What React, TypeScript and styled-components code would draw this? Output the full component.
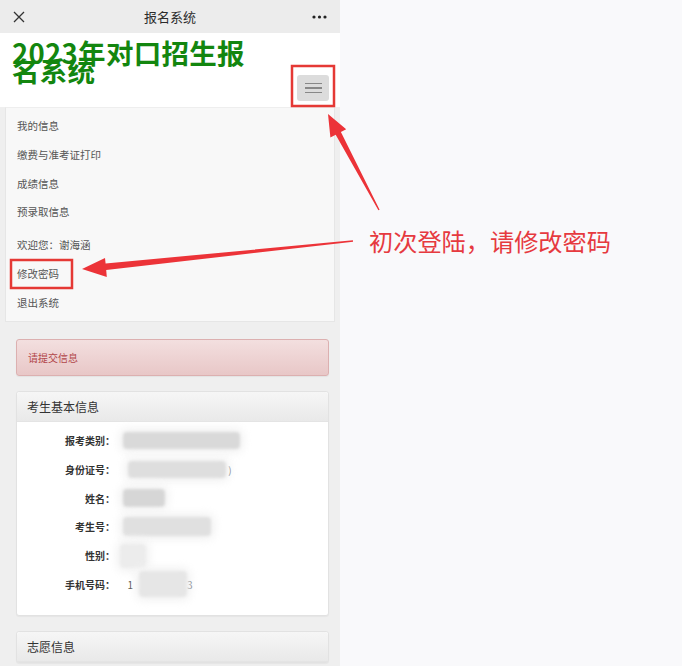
import React from 'react';
import styled, { createGlobalStyle } from 'styled-components';

const GlobalStyle = createGlobalStyle`
  html, body {
    margin: 0;
    padding: 0;
    background: #f9f9fb;
    font-family: "Noto Sans CJK SC", "Noto Sans", sans-serif;
  }
`;

const Page = styled.div`
  position: relative;
  width: 682px;
  height: 666px;
  display: flex;
  overflow: hidden;
  background: #f9f9fb;
`;

const Phone = styled.div`
  width: 340px;
  height: 666px;
  background: #efefef;
  display: flex;
  flex-direction: column;
  overflow: hidden;
`;

const TopBar = styled.div`
  height: 33px;
  flex: none;
  background: #ececec;
  display: grid;
  grid-template-columns: 40px 1fr 40px;
  align-items: center;
  color: #333;
`;

const BarTitle = styled.div`
  text-align: center;
  font-size: 13px;
  color: #2b2b2b;
`;

const BarIcon = styled.div<{ $side: 'left' | 'right' }>`
  display: flex;
  justify-content: ${p => (p.$side === 'left' ? 'flex-start' : 'flex-end')};
  padding: ${p => (p.$side === 'left' ? '0 0 0 13px' : '0 13px 0 0')};
`;

const Header = styled.div`
  height: 74px;
  flex: none;
  background: #fff;
  display: flex;
  justify-content: space-between;
  align-items: flex-end;
  padding: 0 11px 6px 12px;
  box-sizing: border-box;
`;

const Brand = styled.h1`
  align-self: flex-start;
  margin: 10px 0 0;
  width: 256px;
  font-size: 27.5px;
  line-height: 18px;
  font-weight: bold;
  color: #13860f;
  letter-spacing: 0.3px;
`;

const Toggle = styled.button`
  width: 32px;
  height: 26px;
  border: none;
  border-radius: 3px;
  background: #dcdcdc;
  display: flex;
  flex-direction: column;
  align-items: center;
  justify-content: center;
  gap: 3px;
  padding: 0;
`;

const ToggleBar = styled.span`
  display: block;
  width: 17px;
  height: 1.5px;
  background: #888;
`;

const Nav = styled.div`
  flex: none;
  margin: 0 5px;
  background: #f8f8f8;
  border: 1px solid #e6e6e6;
  border-top-color: #eee;
  padding: 4px 0 3px 11px;
  box-sizing: border-box;
`;

const NavGroup = styled.ul<{ $gap?: number }>`
  list-style: none;
  margin: ${p => p.$gap ?? 0}px 0 0;
  padding: 0;
`;

const NavItem = styled.li`
  height: 28.8px;
  line-height: 28.8px;
  font-size: 10.5px;
  color: #555;
`;

const Content = styled.div`
  padding: 17px 11px 0 16px;
  display: flex;
  flex-direction: column;
  gap: 15px;
`;

const Alert = styled.div`
  height: 37px;
  box-sizing: border-box;
  border: 1px solid #dcb0b0;
  border-radius: 3px;
  background: linear-gradient(#f3dfdf, #e8c7c7);
  color: #b2474a;
  font-size: 10px;
  padding-left: 11px;
  display: flex;
  align-items: center;
  box-shadow: 0 1px 1px rgba(0, 0, 0, 0.05);
`;

const Panel = styled.div`
  border: 1px solid #e2e2e2;
  border-radius: 3px;
  background: #fff;
  box-shadow: 0 1px 1px rgba(0, 0, 0, 0.04);
`;

const PanelHeading = styled.div`
  height: 30px;
  box-sizing: border-box;
  padding-left: 10px;
  display: flex;
  align-items: center;
  font-size: 12px;
  color: #333;
  background: linear-gradient(#f6f6f6, #e9e9e9);
  border-bottom: 1px solid #e4e4e4;
  border-radius: 3px 3px 0 0;
`;

const PanelBody = styled.div`
  padding: 5px 0 16px;
  display: grid;
  grid-template-columns: 98px 1fr;
  grid-auto-rows: 28.7px;
  column-gap: 8px;
  align-items: center;
`;

const Label = styled.div`
  text-align: right;
  font-size: 10px;
  font-weight: bold;
  color: #333;
`;

const Value = styled.div`
  display: flex;
  align-items: center;
  font-size: 10px;
  color: #444;
`;

const Smudge = styled.span<{ $w: number; $h?: number; $shade?: string; $dx?: number }>`
  display: inline-block;
  width: ${p => p.$w}px;
  height: ${p => p.$h ?? 17}px;
  margin-left: ${p => p.$dx ?? 0}px;
  background: ${p => p.$shade ?? '#dedede'};
  filter: blur(1.5px);
  box-shadow: 0 0 8px 4px #f3f3f3;
  border-radius: 4px;
`;

const Note = styled.div`
  position: absolute;
  left: 369px;
  top: 225px;
  font-size: 24.2px;
  line-height: 32px;
  color: #e63a3f;
  white-space: nowrap;
`;

const Marks = styled.svg`
  position: absolute;
  left: 0;
  top: 0;
  pointer-events: none;
`;

const basics: [string, React.ReactNode][] = [
  ['报考类别：', <Smudge $w={117} $shade="#d9d9d9" />],
  ['身份证号：', <><Smudge $w={98} $dx={5} />&nbsp;)</>],
  ['姓名：', <Smudge $w={42} $h={18} $shade="#d6d6d6" />],
  ['考生号：', <Smudge $w={88} $h={19} $shade="#e0e0e0" />],
  ['性别：', <Smudge $w={26} $h={24} $shade="#ececec" $dx={-3} />],
  ['手机号码：', <>&nbsp;&nbsp;1<Smudge $w={48} $h={26} $shade="#e6e6e6" $dx={6} />3</>],
];

export default function App() {
  return (
    <Page>
      <GlobalStyle />
      <Phone>
        <TopBar>
          <BarIcon $side="left">
            <svg width="12" height="12" viewBox="0 0 12 12">
              <path d="M1 1 L11 11 M11 1 L1 11" stroke="#333" strokeWidth="1.3" />
            </svg>
          </BarIcon>
          <BarTitle>报名系统</BarTitle>
          <BarIcon $side="right">
            <svg width="15" height="4" viewBox="0 0 15 4">
              <circle cx="2" cy="2" r="1.6" fill="#222" />
              <circle cx="7.5" cy="2" r="1.6" fill="#222" />
              <circle cx="13" cy="2" r="1.6" fill="#222" />
            </svg>
          </BarIcon>
        </TopBar>

        <Header>
          <Brand>2023年对口招生报名系统</Brand>
          <Toggle aria-label="menu">
            <ToggleBar />
            <ToggleBar />
            <ToggleBar />
          </Toggle>
        </Header>

        <Nav>
          <NavGroup>
            <NavItem>我的信息</NavItem>
            <NavItem>缴费与准考证打印</NavItem>
            <NavItem>成绩信息</NavItem>
            <NavItem>预录取信息</NavItem>
          </NavGroup>
          <NavGroup $gap={4}>
            <NavItem>欢迎您：谢海涵</NavItem>
            <NavItem>修改密码</NavItem>
            <NavItem>退出系统</NavItem>
          </NavGroup>
        </Nav>

        <Content>
          <Alert>请提交信息</Alert>
          <Panel>
            <PanelHeading>考生基本信息</PanelHeading>
            <PanelBody>
              {basics.map(([label, value]) => (
                <React.Fragment key={label}>
                  <Label>{label}</Label>
                  <Value>{value}</Value>
                </React.Fragment>
              ))}
            </PanelBody>
          </Panel>
          <Panel>
            <PanelHeading>志愿信息</PanelHeading>
          </Panel>
        </Content>
      </Phone>

      <Note>初次登陆，请修改密码</Note>

      <Marks width="682" height="666" viewBox="0 0 682 666">
        <rect x="292" y="66" width="42" height="40" fill="none" stroke="#e53935" strokeWidth="2.5" />
        <rect x="11" y="260" width="61" height="28" fill="none" stroke="#e53935" strokeWidth="2.5" />
        <polygon
          points="328,114 346.2,129.2 340.9,132 379.6,209.7 378.4,210.3 335.7,134.8 330.4,137.6"
          fill="#ec3338"
        />
        <polygon
          points="82,269 106.8,277 106.2,270 353.1,241.7 352.9,240.3 105.6,263.5 105,258"
          fill="#ec3338"
        />
      </Marks>
    </Page>
  );
}
